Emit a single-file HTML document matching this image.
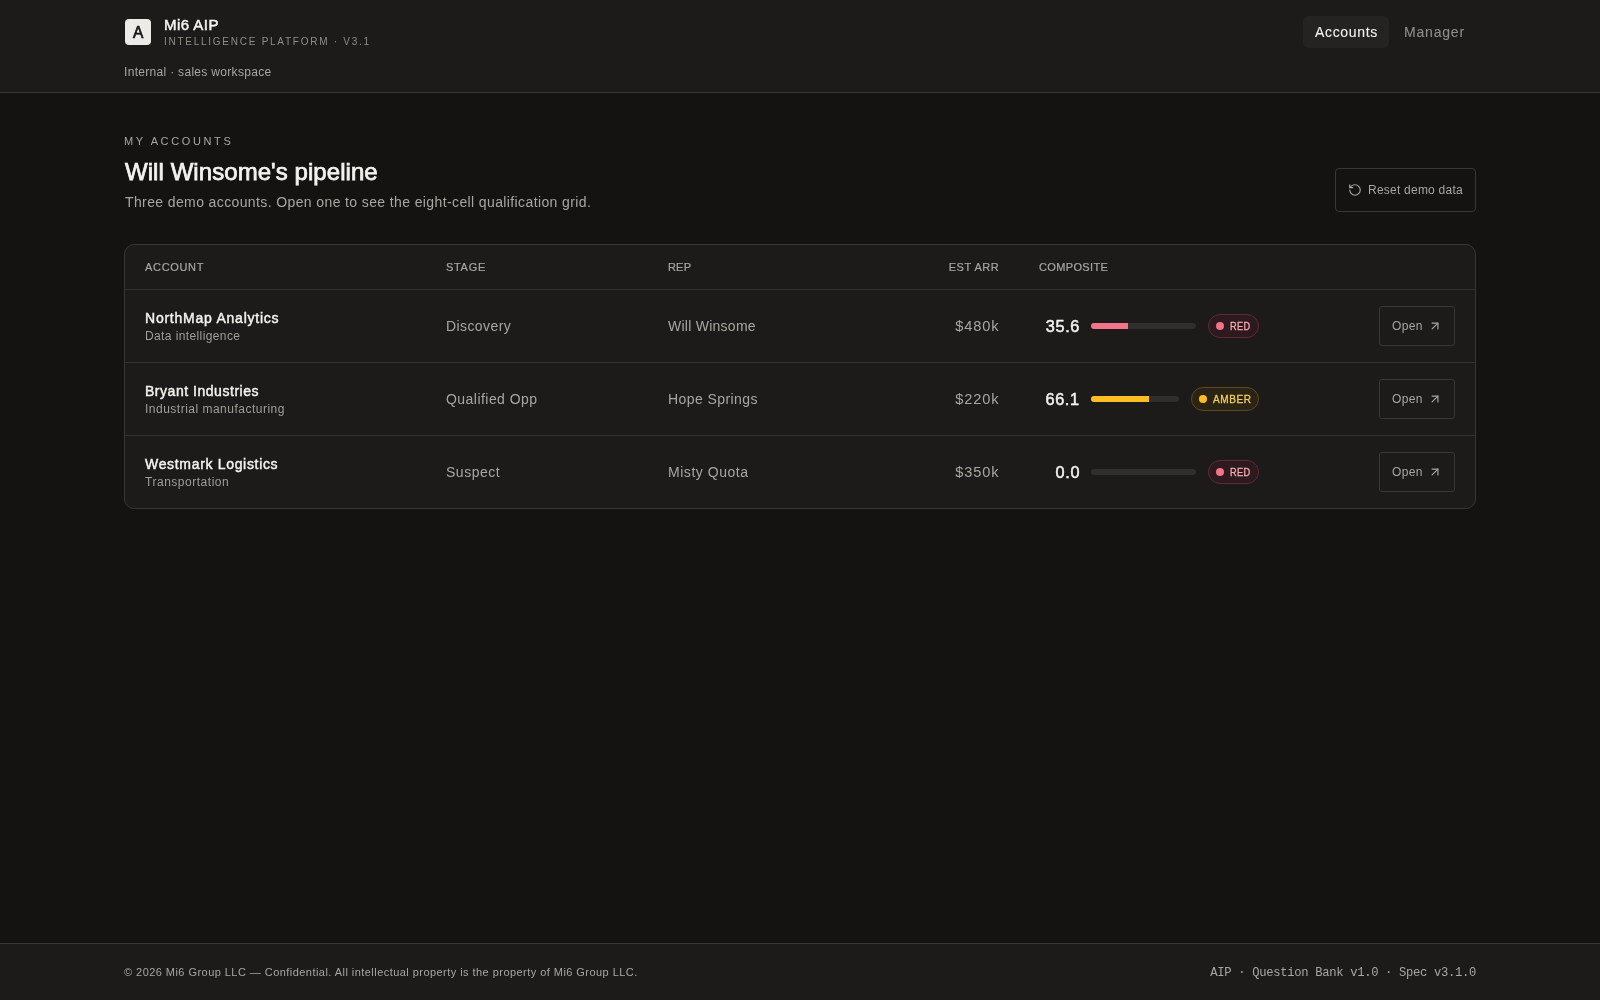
<!DOCTYPE html>
<html lang="en">
<head>
<meta charset="utf-8">
<title>Mi6 AIP · Accounts</title>
<style>
*{box-sizing:border-box;margin:0;padding:0}
html,body{width:1600px;height:1000px;overflow:hidden}
body{background:#141312;color:#f4f2ee;font-family:"Liberation Sans",sans-serif;position:relative}
#wrap{position:absolute;left:0;top:0;width:1600px;height:1000px;will-change:transform}
h1,strong,small,a,p,span{font-weight:normal;font-style:normal;text-decoration:none}
.t{position:absolute;display:block;white-space:nowrap;line-height:1}
.box{position:absolute;display:block}
.topband{left:0;top:0;width:1600px;height:93px;background:#1c1b1a;border-bottom:1px solid #383735}
.footband{left:0;top:943px;width:1600px;height:57px;background:#1c1b1a;border-top:1px solid #383735}
.logo{left:125px;top:19px;width:26px;height:26px;border-radius:4px;background:#edebe7}
.navon{left:1303px;top:16px;width:86px;height:32px;border-radius:6px;background:#242322}
.resetbtn{left:1335px;top:168px;width:141px;height:44px;border:1px solid #383735;border-radius:4px}
.card{left:124px;top:244px;width:1352px;height:265px;background:#1c1b1a;border:1px solid #383735;border-radius:10px}
.hl{left:125px;width:1350px;height:1px;background:#333230}
.bar{height:6px;border-radius:3px;background:#2f2e2c;overflow:hidden}
.bar i{display:block;height:6px}
.pill{height:24px;border-radius:12px}
.dot{width:8px;height:8px;border-radius:4px}
.red{background:#2c1a1e;border:1px solid #5e2a35}
.amber{background:#2b2314;border:1px solid #5c4a1e}
.openbtn{left:1379px;width:76px;height:40px;border:1px solid #383735;border-radius:3px}
svg{position:absolute;overflow:visible}
</style>
</head>
<body>
<div id="wrap">
<header>
<div class="box topband"></div>
<div class="box logo"></div>
<span class="t" id="logoA" style="left:132.65px;top:24.50px;font-size:16.00px;color:#161514;transform:scaleX(0.97);transform-origin:0 0;-webkit-text-stroke:0.7px #161514;">A</span>
<span class="t" id="brand" style="left:164.00px;top:17.00px;font-size:15.00px;color:#f4f2ee;letter-spacing:0.465px;-webkit-text-stroke:0.5px #f4f2ee;">Mi6 AIP</span>
<span class="t" id="brandsub" style="left:164.00px;top:36.50px;font-size:10.00px;color:#8f8d88;letter-spacing:1.739px;">INTELLIGENCE PLATFORM · V3.1</span>
<span class="t" id="internal" style="left:124.00px;top:66.00px;font-size:12.00px;color:#a8a6a1;letter-spacing:0.310px;">Internal · sales workspace</span>
<nav>
<div class="box navon"></div>
<a class="t" id="navacc" style="left:1315.00px;top:25.00px;font-size:14.00px;color:#f4f2ee;letter-spacing:0.674px;-webkit-text-stroke:0.1px #f4f2ee;">Accounts</a>
<a class="t" id="navman" style="left:1404.00px;top:25.00px;font-size:14.00px;color:#8f8d88;letter-spacing:0.812px;-webkit-text-stroke:0.1px #8f8d88;">Manager</a>
</nav>
</header>
<main>
<span class="t" id="eyebrow" style="left:124.00px;top:135.50px;font-size:11.00px;color:#a8a6a1;letter-spacing:2.629px;">MY ACCOUNTS</span>
<h1 class="t" id="title" style="left:125.00px;top:159.50px;font-size:24.00px;color:#f4f2ee;letter-spacing:0.063px;-webkit-text-stroke:0.75px #f4f2ee;">Will Winsome's pipeline</h1>
<p class="t" id="lead" style="left:125.00px;top:195.00px;font-size:14.00px;color:#a8a6a1;letter-spacing:0.384px;">Three demo accounts. Open one to see the eight-cell qualification grid.</p>
<div class="box resetbtn"></div>
<svg style="left:1348px;top:183px" width="14" height="14" viewBox="0 0 24 24" fill="none" stroke="#a8a6a1" stroke-width="2" stroke-linecap="round" stroke-linejoin="round"><path d="M3 12a9 9 0 1 0 9-9 9.75 9.75 0 0 0-6.74 2.74L3 8"/><path d="M3 3v5h5"/></svg>
<span class="t" id="reset" style="left:1368.00px;top:184.00px;font-size:12.00px;color:#a8a6a1;letter-spacing:0.232px;">Reset demo data</span>
<section>
<div class="box card"></div>
<div class="row">
<span class="t" id="thacc" style="left:145.00px;top:261.50px;font-size:11.00px;color:#a8a6a1;letter-spacing:0.674px;-webkit-text-stroke:0.2px #a8a6a1;">ACCOUNT</span>
<span class="t" id="thstage" style="left:446.00px;top:261.50px;font-size:11.00px;color:#a8a6a1;letter-spacing:0.690px;-webkit-text-stroke:0.2px #a8a6a1;">STAGE</span>
<span class="t" id="threp" style="left:668.00px;top:261.50px;font-size:11.00px;color:#a8a6a1;letter-spacing:0.179px;-webkit-text-stroke:0.2px #a8a6a1;">REP</span>
<span class="t" id="tharr" style="left:948.77px;top:261.50px;font-size:11.00px;color:#a8a6a1;letter-spacing:0.510px;-webkit-text-stroke:0.2px #a8a6a1;">EST ARR</span>
<span class="t" id="thcomp" style="left:1039.00px;top:261.50px;font-size:11.00px;color:#a8a6a1;letter-spacing:0.357px;-webkit-text-stroke:0.2px #a8a6a1;">COMPOSITE</span>
<div class="box hl" style="top:289px"></div>
</div>
<div class="row">
<strong class="t" id="nm0" style="left:145.00px;top:311.00px;font-size:14.00px;color:#f4f2ee;letter-spacing:0.765px;-webkit-text-stroke:0.45px #f4f2ee;">NorthMap Analytics</strong>
<span class="t" id="sub0" style="left:145.00px;top:330.00px;font-size:12.00px;color:#a09e99;letter-spacing:0.392px;">Data intelligence</span>
<span class="t" id="st0" style="left:446.00px;top:319.00px;font-size:14.00px;color:#a8a6a1;letter-spacing:0.413px;">Discovery</span>
<span class="t" id="rep0" style="left:668.00px;top:319.00px;font-size:14.00px;color:#a8a6a1;letter-spacing:0.257px;">Will Winsome</span>
<span class="t" id="arr0" style="left:955.27px;top:318.70px;font-size:14.60px;color:#a8a6a1;letter-spacing:0.868px;">$480k</span>
<span class="t" id="num0" style="left:1045.76px;top:317.85px;font-size:16.30px;color:#f4f2ee;letter-spacing:0.660px;-webkit-text-stroke:0.5px #f4f2ee;">35.6</span>
<div class="box bar" style="left:1091px;top:323px;width:105px"><i style="width:37px;background:#f4728a"></i></div>
<div class="box pill red" style="left:1208px;top:314px;width:51px"></div>
<div class="box dot" style="left:1216px;top:322px;background:#f4728a"></div>
<span class="t" id="pill0" style="left:1230.00px;top:321.50px;font-size:10.00px;color:#f9a8b4;letter-spacing:0.369px;transform:scaleX(0.92);transform-origin:0 0;-webkit-text-stroke:0.3px #f9a8b4;">RED</span>
<div class="box openbtn" style="top:306px"></div>
<span class="t" id="open0" style="left:1392.00px;top:320.00px;font-size:12.00px;color:#a8a6a1;letter-spacing:0.332px;">Open</span>
<svg style="left:1428px;top:319px" width="14" height="14" viewBox="0 0 24 24" fill="none" stroke="#a8a6a1" stroke-width="2" stroke-linecap="round" stroke-linejoin="round"><path d="M7 7h10v10"/><path d="M7 17 17 7"/></svg>
<div class="box hl" style="top:362px"></div>
</div>
<div class="row">
<strong class="t" id="nm1" style="left:145.00px;top:384.00px;font-size:14.00px;color:#f4f2ee;letter-spacing:0.530px;-webkit-text-stroke:0.45px #f4f2ee;">Bryant Industries</strong>
<span class="t" id="sub1" style="left:145.00px;top:403.00px;font-size:12.00px;color:#a09e99;letter-spacing:0.493px;">Industrial manufacturing</span>
<span class="t" id="st1" style="left:446.00px;top:392.00px;font-size:14.00px;color:#a8a6a1;letter-spacing:0.457px;">Qualified Opp</span>
<span class="t" id="rep1" style="left:668.00px;top:392.00px;font-size:14.00px;color:#a8a6a1;letter-spacing:0.417px;">Hope Springs</span>
<span class="t" id="arr1" style="left:955.27px;top:391.70px;font-size:14.60px;color:#a8a6a1;letter-spacing:0.868px;">$220k</span>
<span class="t" id="num1" style="left:1045.53px;top:390.85px;font-size:16.30px;color:#f4f2ee;letter-spacing:0.621px;-webkit-text-stroke:0.5px #f4f2ee;">66.1</span>
<div class="box bar" style="left:1091px;top:396px;width:88px"><i style="width:58px;background:#fbbf24"></i></div>
<div class="box pill amber" style="left:1191px;top:387px;width:68px"></div>
<div class="box dot" style="left:1199px;top:395px;background:#fbbf24"></div>
<span class="t" id="pill1" style="left:1213.00px;top:394.50px;font-size:10.00px;color:#f5cf5a;letter-spacing:0.605px;-webkit-text-stroke:0.3px #f5cf5a;">AMBER</span>
<div class="box openbtn" style="top:379px"></div>
<span class="t" id="open1" style="left:1392.00px;top:393.00px;font-size:12.00px;color:#a8a6a1;letter-spacing:0.332px;">Open</span>
<svg style="left:1428px;top:392px" width="14" height="14" viewBox="0 0 24 24" fill="none" stroke="#a8a6a1" stroke-width="2" stroke-linecap="round" stroke-linejoin="round"><path d="M7 7h10v10"/><path d="M7 17 17 7"/></svg>
<div class="box hl" style="top:435px"></div>
</div>
<div class="row">
<strong class="t" id="nm2" style="left:145.00px;top:457.00px;font-size:14.00px;color:#f4f2ee;letter-spacing:0.676px;-webkit-text-stroke:0.45px #f4f2ee;">Westmark Logistics</strong>
<span class="t" id="sub2" style="left:145.00px;top:476.00px;font-size:12.00px;color:#a09e99;letter-spacing:0.524px;">Transportation</span>
<span class="t" id="st2" style="left:446.00px;top:465.00px;font-size:14.00px;color:#a8a6a1;letter-spacing:0.511px;">Suspect</span>
<span class="t" id="rep2" style="left:668.00px;top:465.00px;font-size:14.00px;color:#a8a6a1;letter-spacing:0.535px;">Misty Quota</span>
<span class="t" id="arr2" style="left:955.27px;top:464.70px;font-size:14.60px;color:#a8a6a1;letter-spacing:0.868px;">$350k</span>
<span class="t" id="num2" style="left:1055.39px;top:463.85px;font-size:16.30px;color:#f4f2ee;letter-spacing:0.732px;-webkit-text-stroke:0.5px #f4f2ee;">0.0</span>
<div class="box bar" style="left:1091px;top:469px;width:105px"></div>
<div class="box pill red" style="left:1208px;top:460px;width:51px"></div>
<div class="box dot" style="left:1216px;top:468px;background:#f4728a"></div>
<span class="t" id="pill2" style="left:1230.00px;top:467.50px;font-size:10.00px;color:#f9a8b4;letter-spacing:0.369px;transform:scaleX(0.92);transform-origin:0 0;-webkit-text-stroke:0.3px #f9a8b4;">RED</span>
<div class="box openbtn" style="top:452px"></div>
<span class="t" id="open2" style="left:1392.00px;top:466.00px;font-size:12.00px;color:#a8a6a1;letter-spacing:0.332px;">Open</span>
<svg style="left:1428px;top:465px" width="14" height="14" viewBox="0 0 24 24" fill="none" stroke="#a8a6a1" stroke-width="2" stroke-linecap="round" stroke-linejoin="round"><path d="M7 7h10v10"/><path d="M7 17 17 7"/></svg>
</div>
</section>
</main>
<footer>
<div class="box footband"></div>
<small class="t" id="copy" style="left:124.00px;top:966.50px;font-size:11.00px;color:#a8a6a1;letter-spacing:0.452px;">© 2026 Mi6 Group LLC — Confidential. All intellectual property is the property of Mi6 Group LLC.</small>
<small class="t" id="mono" style="left:1210.33px;top:966.90px;font-size:12.20px;color:#a8a6a1;letter-spacing:-0.322px;font-family:'Liberation Mono',monospace;">AIP · Question Bank v1.0 · Spec v3.1.0</small>
</footer>
</div>
</body>
</html>
